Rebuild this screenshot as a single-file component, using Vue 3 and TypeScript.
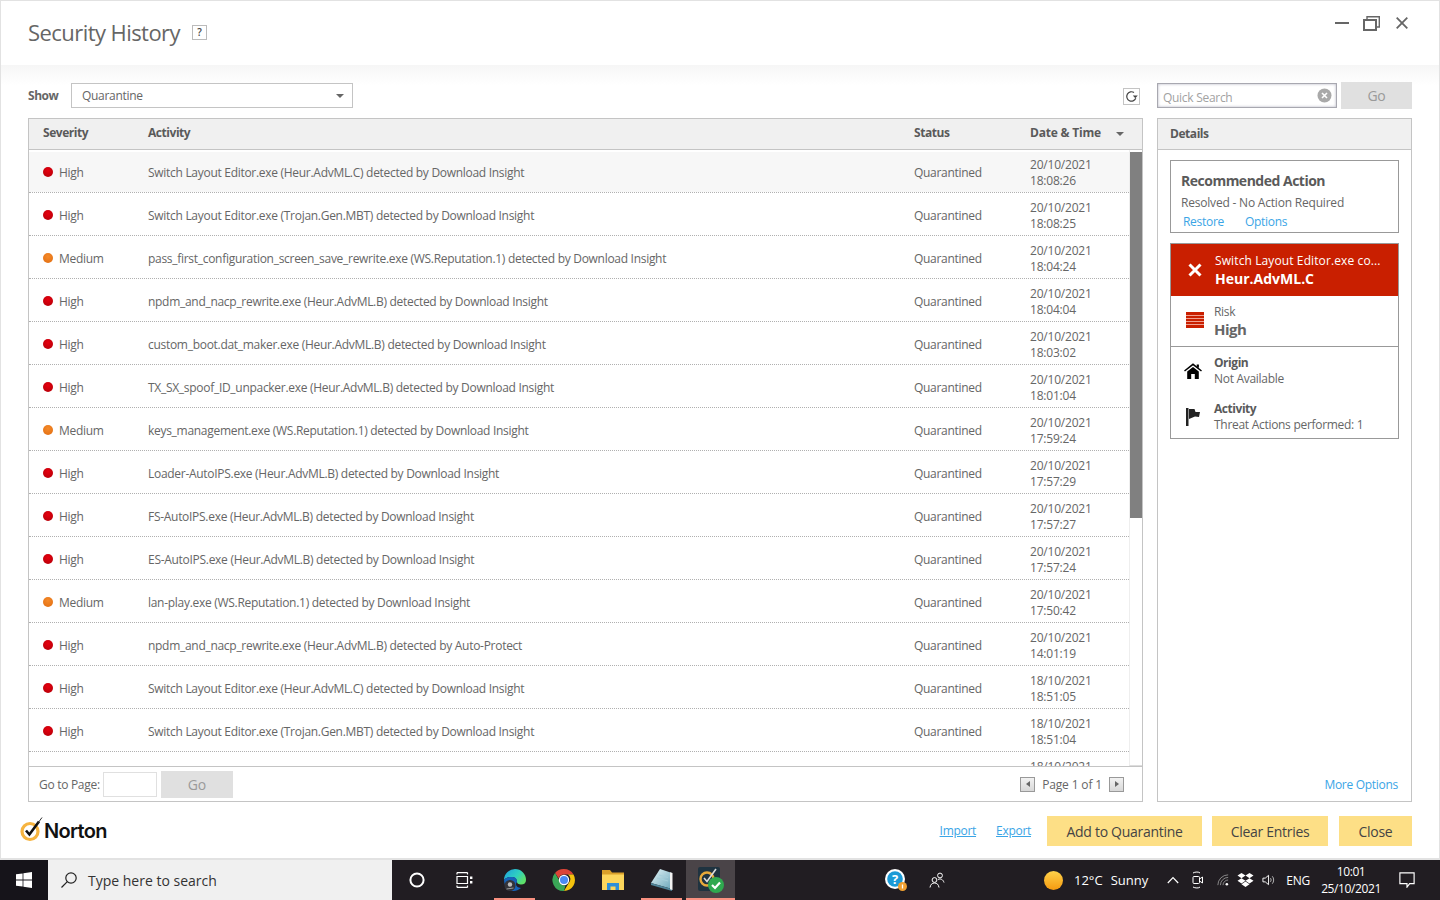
<script setup lang="ts">
interface Row {
  severity: 'High' | 'Medium'
  activity: string
  date: string
  time: string
}

const rows: Row[] = [
  { severity: 'High', activity: 'Switch Layout Editor.exe (Heur.AdvML.C) detected by Download Insight', date: '20/10/2021', time: '18:08:26' },
  { severity: 'High', activity: 'Switch Layout Editor.exe (Trojan.Gen.MBT) detected by Download Insight', date: '20/10/2021', time: '18:08:25' },
  { severity: 'Medium', activity: 'pass_first_configuration_screen_save_rewrite.exe (WS.Reputation.1) detected by Download Insight', date: '20/10/2021', time: '18:04:24' },
  { severity: 'High', activity: 'npdm_and_nacp_rewrite.exe (Heur.AdvML.B) detected by Download Insight', date: '20/10/2021', time: '18:04:04' },
  { severity: 'High', activity: 'custom_boot.dat_maker.exe (Heur.AdvML.B) detected by Download Insight', date: '20/10/2021', time: '18:03:02' },
  { severity: 'High', activity: 'TX_SX_spoof_ID_unpacker.exe (Heur.AdvML.B) detected by Download Insight', date: '20/10/2021', time: '18:01:04' },
  { severity: 'Medium', activity: 'keys_management.exe (WS.Reputation.1) detected by Download Insight', date: '20/10/2021', time: '17:59:24' },
  { severity: 'High', activity: 'Loader-AutoIPS.exe (Heur.AdvML.B) detected by Download Insight', date: '20/10/2021', time: '17:57:29' },
  { severity: 'High', activity: 'FS-AutoIPS.exe (Heur.AdvML.B) detected by Download Insight', date: '20/10/2021', time: '17:57:27' },
  { severity: 'High', activity: 'ES-AutoIPS.exe (Heur.AdvML.B) detected by Download Insight', date: '20/10/2021', time: '17:57:24' },
  { severity: 'Medium', activity: 'lan-play.exe (WS.Reputation.1) detected by Download Insight', date: '20/10/2021', time: '17:50:42' },
  { severity: 'High', activity: 'npdm_and_nacp_rewrite.exe (Heur.AdvML.B) detected by Auto-Protect', date: '20/10/2021', time: '14:01:19' },
  { severity: 'High', activity: 'Switch Layout Editor.exe (Heur.AdvML.C) detected by Download Insight', date: '18/10/2021', time: '18:51:05' },
  { severity: 'High', activity: 'Switch Layout Editor.exe (Trojan.Gen.MBT) detected by Download Insight', date: '18/10/2021', time: '18:51:04' },
]
</script>

<template>
  <div class="screen">
    <div class="window">
      <header class="title-bar">
        <h1>Security History</h1>
        <span class="help">?</span>
        <div class="win-controls">
          <svg width="14" height="14" viewBox="0 0 14 14"><path d="M0 7h14" stroke="#666" stroke-width="2" /></svg>
          <svg class="restore" width="17" height="15" viewBox="0 0 17 15" fill="none" stroke="#666"><path d="M4 3V.7h12.300V11H13" stroke-width="1.400" /><rect x="1" y="4" width="12" height="10" stroke-width="2" /></svg>
          <svg width="12" height="12" viewBox="0 0 12 12"><path d="M.7.7l10.600 10.600M11.300.7L.7 11.300" stroke="#666" stroke-width="1.800" /></svg>
        </div>
      </header>

      <div class="toolbar">
        <span class="show-label">Show</span>
        <div class="select">
          <span>Quarantine</span>
          <i class="caret"></i>
        </div>
        <button class="refresh" aria-label="Refresh">
          <svg width="13" height="13" viewBox="0 0 13 13" fill="none"><path d="M10.800 8.300A4.700 4.700 0 1 1 9 2.500" stroke="#444" stroke-width="1.200" /><path d="M7.800 5.500h5l-2.500 2.800z" fill="#444" /></svg>
        </button>
        <div class="search">
          <span>Quick Search</span>
          <svg width="15" height="15" viewBox="0 0 15 15"><circle cx="7.500" cy="7.500" r="7" fill="#a9a9a9" /><path d="M5 5l5 5M10 5l-5 5" stroke="#fff" stroke-width="1.600" /></svg>
        </div>
        <button class="go go-top">Go</button>
      </div>

      <main class="panels">
        <section class="table-panel">
          <div class="table-head">
            <span>Severity</span>
            <span>Activity</span>
            <span>Status</span>
            <span class="date-head">Date &amp; Time<i class="caret small"></i></span>
          </div>
          <div class="table-body">
            <div class="rows">
              <div v-for="(row, i) in rows" :key="i" class="row" :class="{ first: i === 0 }">
                <span class="sev"><i class="dot" :class="row.severity.toLowerCase()"></i>{{ row.severity }}</span>
                <span>{{ row.activity }}</span>
                <span>Quarantined</span>
                <span class="when">{{ row.date }}<br />{{ row.time }}</span>
              </div>
              <div class="row clipped"><span></span><span></span><span></span><span class="when">18/10/2021</span></div>
            </div>
            <div class="scrollbar"><div class="thumb"></div></div>
          </div>
          <div class="table-foot">
            <span>Go to Page:</span>
            <div class="page-input"></div>
            <button class="go go-page">Go</button>
            <div class="pager">
              <button class="page-btn"><i class="tri left"></i></button>
              <span>Page 1 of 1</span>
              <button class="page-btn"><i class="tri right"></i></button>
            </div>
          </div>
        </section>

        <aside class="details">
          <div class="details-head">Details</div>
          <div class="details-body">
            <div class="card action">
              <h3>Recommended Action</h3>
              <p>Resolved - No Action Required</p>
              <div class="action-links"><a>Restore</a><a>Options</a></div>
            </div>
            <div class="card info">
              <div class="threat">
                <svg width="14" height="14" viewBox="0 0 14 14"><path d="M1.500 1.500l11 11M12.500 1.500l-11 11" stroke="#fff" stroke-width="3" /></svg>
                <div>
                  <div class="threat-file">Switch Layout Editor.exe co...</div>
                  <div class="threat-name">Heur.AdvML.C</div>
                </div>
              </div>
              <div class="risk">
                <svg width="18" height="16" viewBox="0 0 18 16"><path d="M0 0h18v16H0z" fill="#c91f00" /><path d="M0 3.500h18M0 6.500h18M0 9.500h18M0 12.500h18" stroke="#f0a090" /></svg>
                <div>
                  <div class="risk-label">Risk</div>
                  <div class="risk-value">High</div>
                </div>
              </div>
              <div class="meta">
                <div class="meta-row">
                  <svg width="18" height="16" viewBox="0 0 18 16"><path d="M.5 8L9 1.300 17.500 8" fill="none" stroke="#000" stroke-width="1.500" /><path d="M3.200 8.600L9 4l5.800 4.600V16h-4v-5H7.200v5h-4zM12.700 1.500h2.200v3.600l-2.200-1.700z" fill="#000" /></svg>
                  <div><b>Origin</b><span>Not Available</span></div>
                </div>
                <div class="meta-row">
                  <svg width="14" height="18" viewBox="0 0 14 18"><path d="M0 0h2.500v18H0z" fill="#222" /><path d="M3 1h5.500l1 3H14l-1 5-4-.5L3 11z" fill="#222" /></svg>
                  <div><b>Activity</b><span>Threat Actions performed: 1</span></div>
                </div>
              </div>
            </div>
            <a class="more">More Options</a>
          </div>
        </aside>
      </main>

      <footer class="actions">
        <div class="norton">
          <svg width="23" height="25" viewBox="0 0 23 25"><circle cx="10" cy="14.500" r="8" fill="none" stroke="#f6b440" stroke-width="3.200" /><path d="M6 13.500l3.400 4L19 4.500" fill="none" stroke="#111" stroke-width="2.600" /><path d="M18 6l4-5.500" fill="none" stroke="#333" /></svg>
          <span>Norton</span>
        </div>
        <a class="link import">Import</a>
        <a class="link export">Export</a>
        <button class="yellow add">Add to Quarantine</button>
        <button class="yellow clear">Clear Entries</button>
        <button class="yellow close">Close</button>
      </footer>
    </div>

    <div class="taskbar">
      <div class="start">
        <svg width="16" height="16" viewBox="0 0 16 16" fill="#fff"><path d="M0 2.300l6.600-.9v6.200H0zM7.400 1.300L16 0v7.600H7.400zM0 8.400h6.600v6.200L0 13.700zM7.400 8.400H16V16l-8.600-1.200z" /></svg>
      </div>
      <div class="tb-search">
        <svg width="18" height="18" viewBox="0 0 18 18" fill="none" stroke="#222" stroke-width="1.200"><circle cx="11" cy="7" r="5.200" /><path d="M7.300 10.700L1.500 16.500" /></svg>
        <span>Type here to search</span>
      </div>
      <div class="slot">
        <svg width="16" height="16" viewBox="0 0 16 16"><circle cx="8" cy="8" r="6.600" fill="none" stroke="#fff" stroke-width="2" /></svg>
      </div>
      <div class="slot task-view">
        <svg width="17" height="16" viewBox="0 0 17 16" fill="none" stroke="#fff" stroke-width="1.200"><path d="M1 .6h10.500M1 15.400h10.500M1 4.500h10.500v7H1z" /><path d="M1 .6v1.800M11.500.6v1.800M1 13.600v1.800M11.500 13.600v1.800" /><path d="M14 4.500h2.400v2.400H14zM14 9h2.400v2.400H14z" fill="#fff" stroke="none" /></svg>
      </div>
      <div class="slot marked">
        <svg width="24" height="24" viewBox="0 0 24 24"><defs><linearGradient id="edgeA" x1="0" y1="0" x2="1" y2="0.600"><stop offset="0" stop-color="#1d9fe0" /><stop offset="0.600" stop-color="#2fd0c0" /><stop offset="1" stop-color="#5ee06a" /></linearGradient></defs><path d="M1 12a11 11 0 0 1 22 0c0 3-2 4.500-5 4.500-2.500 0-4-1-4-2.500 0-4-3-5-5.500-5S2.500 10 1 12z" fill="url(#edgeA)" /><path d="M1 12c1.500-2 4-3 7.500-3S14 10 14 14c-2 2-1 6 4 6-5 4.500-11 3.500-14 0-2-2-3-5-3-8z" fill="#1662b8" /><circle cx="7" cy="17.500" r="5.500" fill="#34343a" /><circle cx="7" cy="16.500" r="2.200" fill="#bcbcbc" /><path d="M3.500 21l7-1" stroke="#999" /></svg>
      </div>
      <div class="slot">
        <svg width="24" height="24" viewBox="0 0 24 24"><path d="M12 1a11 11 0 0 1 9.500 5.500H12a5.500 5.500 0 0 0-5.300 4L3 5A11 11 0 0 1 12 1z" fill="#db4437" /><path d="M21.500 6.500A11 11 0 0 1 12 23l4.700-8a5.500 5.500 0 0 0-.8-8.500z" fill="#f4c20d" /><path d="M12 23A11 11 0 0 1 3 5l4 7a5.500 5.500 0 0 0 6.500 5.300z" fill="#3aa757" /><circle cx="12" cy="12" r="5.200" fill="#fff" /><circle cx="12" cy="12" r="4" fill="#4a8af4" /></svg>
      </div>
      <div class="slot">
        <svg width="22" height="20" viewBox="0 0 22 20"><path d="M0 0h8l2 2.500h12v4H0z" fill="#d9a02a" /><path d="M0 4.500h22V20H0z" fill="#fcd65c" /><path d="M5 20v-7h12v7h-3.500v-3.500h-5V20z" fill="#2f8fd8" /></svg>
      </div>
      <div class="slot marked">
        <svg width="24" height="24" viewBox="0 0 24 24"><defs><linearGradient id="noteA" x1="0" y1="0" x2="1" y2="1"><stop offset="0" stop-color="#e4f4f7" /><stop offset="1" stop-color="#6aa6ba" /></linearGradient></defs><path d="M10 1l12 4v16L1 15z" fill="url(#noteA)" /><path d="M1 15l21 6v2L1 17z" fill="#4f8499" /><path d="M20 4.300l2.500.8v17l-2.500-.8z" fill="#f2f2f2" /><path d="M9 7l9 2.500M7 10l11 3" stroke="#a5cfdb" /></svg>
      </div>
      <div class="slot active marked">
        <svg width="28" height="28" viewBox="0 0 28 28"><rect x="1" y="1" width="22" height="24" rx="2" fill="#1f3340" /><circle cx="10" cy="13" r="6.500" fill="none" stroke="#e7a93a" stroke-width="2.400" /><path d="M7 12l3 3.500L19 3" fill="none" stroke="#ddd" stroke-width="1.600" /><circle cx="19" cy="19" r="8" fill="#2fa84f" /><path d="M15 19l3 3 5-5.500" fill="none" stroke="#fff" stroke-width="2.200" /></svg>
      </div>

      <div class="tray">
        <svg class="t-help" width="24" height="24" viewBox="0 0 24 24"><circle cx="11" cy="11" r="10" fill="#fff" /><circle cx="11" cy="11" r="7.800" fill="#1b9ad6" /><text x="11" y="15.500" text-anchor="middle" font-size="13" font-weight="700" fill="#fff" font-family="Open Sans, sans-serif">?</text><circle cx="18.500" cy="18.500" r="4.500" fill="#f0a030" /><path d="M18.500 16.500v4" stroke="#fff" stroke-width="1.300" /></svg>
        <svg class="t-people" width="16" height="16" viewBox="0 0 16 16" fill="none" stroke="#fff"><circle cx="5.500" cy="8" r="2.400" /><path d="M1 15.500c.5-3 2-4.500 4.500-4.500s4 1.500 4.500 4.500" /><circle cx="11" cy="3.500" r="2.400" /><path d="M9 7.500c2.500-1.200 5-.2 6 3" /></svg>
        <i class="sun"></i>
        <span class="temp">12°C</span>
        <span class="sky">Sunny</span>
        <svg class="t-chev" width="12" height="8" viewBox="0 0 12 8" fill="none" stroke="#fff" stroke-width="1.200"><path d="M.8 7L6 1.500 11.200 7" /></svg>
        <svg class="t-meet" width="12" height="18" viewBox="0 0 12 18" fill="none" stroke="#fff"><path d="M1 2c2-1.300 6-1.300 7 0M1 16c2 1.300 6 1.300 7 0" /><rect x="1" y="5.500" width="6.500" height="7" rx="1" /><path d="M7.500 8l3-2v6l-3-2" /></svg>
        <svg class="t-wifi" width="12" height="12" viewBox="0 0 14 14" fill="none" stroke="#999"><path d="M1 13A12 12 0 0 1 13 1M4 13a9 9 0 0 1 9-9M7 13a6 6 0 0 1 6-6" /><circle cx="11.500" cy="12" r="1.500" fill="#fff" stroke="none" /></svg>
        <svg class="t-drop" width="17" height="14" viewBox="0 0 16 14" fill="#fff"><path d="M4 0l4 2.600L4 5.200 0 2.600zM12 0l4 2.600-4 2.600-4-2.600zM0 7.800l4-2.600 4 2.600-4 2.600zM8 7.800l4-2.600 4 2.600-4 2.600zM4 11.200L8 8.600l4 2.600L8 14z" /></svg>
        <svg class="t-vol" width="14" height="14" viewBox="0 0 15 14" fill="none" stroke="#fff"><path d="M1 5v4h2.500L7 12V2L3.500 5z" /><path d="M9 5c1 1 1 3 0 4M11 3c2 2 2 6 0 8" stroke="#bbb" /></svg>
        <span class="lang">ENG</span>
        <div class="clock"><span>10:01</span><span>25/10/2021</span></div>
        <svg class="t-note" width="16" height="16" viewBox="0 0 18 18" fill="none" stroke="#fff" stroke-width="1.300"><path d="M1 1h16v12h-5l-3 4v-4H1z" /></svg>
      </div>
    </div>
  </div>
</template>

<style>
html,
body {
  margin: 0;
  overflow: hidden;
}
</style>

<style scoped>
.screen {
  width: 1440px;
  height: 900px;
  display: flex;
  flex-direction: column;
  font-family: 'Open Sans', 'Noto Sans', sans-serif;
  font-size: 12px;
  letter-spacing: -0.29px;
  color: #666;
  background: #fff;
}

button {
  font: inherit;
  letter-spacing: inherit;
  border: 0;
  padding: 0;
}

.window {
  height: 860px;
  box-sizing: border-box;
  border: 1px solid #e2e2e2;
  border-bottom-width: 2px;
  display: flex;
  flex-direction: column;
}

.title-bar {
  height: 64px;
  flex: none;
  display: flex;
  align-items: center;
  padding: 0 31px 0 27px;
  box-sizing: border-box;
}

.title-bar h1 {
  margin: -2px 0 0;
  font-size: 22px;
  font-weight: 400;
  color: #666;
  letter-spacing: -0.56px;
}

.help {
  width: 13px;
  height: 13px;
  margin: -1px 0 0 12px;
  border: 1px solid #bbb;
  font-size: 10px;
  font-weight: 600;
  line-height: 13px;
  text-align: center;
  color: #444;
}

.win-controls {
  margin: -20px 0 0 auto;
  display: flex;
  align-items: center;
  gap: 14px;
}

.restore {
  margin-right: 2px;
}

.toolbar {
  height: 53px;
  flex: none;
  box-sizing: border-box;
  padding: 18px 27px 0;
  display: flex;
  align-items: flex-start;
  background: linear-gradient(#f6f6f6, #fff 20px);
}

.show-label {
  width: 43px;
  line-height: 25px;
  font-weight: 700;
  letter-spacing: -0.45px;
}

.select {
  width: 282px;
  height: 25px;
  box-sizing: border-box;
  border: 1px solid #c4c4c4;
  background: #fff;
  padding: 0 8px 0 10px;
  display: flex;
  align-items: center;
  justify-content: space-between;
  line-height: 23px;
}

.caret {
  width: 0;
  height: 0;
  border-left: 4px solid transparent;
  border-right: 4px solid transparent;
  border-top: 4px solid #666;
}

.caret.small {
  margin: 2px 0 0 15px;
}

.refresh {
  width: 17px;
  height: 17px;
  box-sizing: border-box;
  margin: 5px 0 0 770px;
  border: 1px solid #c4c4c4;
  background: #fff;
  display: flex;
  align-items: center;
  justify-content: center;
}

.search {
  width: 180px;
  height: 25px;
  margin-left: 17px;
  box-sizing: border-box;
  border: 1px solid #a8a8b0;
  box-shadow: inset 0 0 3px #b4b4c2;
  background: #fff;
  padding: 3px 4px 0 5px;
  display: flex;
  align-items: center;
  justify-content: space-between;
  color: #a2a2a2;
}

.search svg {
  margin-top: -4px;
}

.go {
  background: #e0e0e0;
  color: #9a9a9a;
  font-size: 14px;
}

.go-top {
  width: 71px;
  height: 27px;
  margin: -1px 0 0 4px;
}

.panels {
  height: 684px;
  flex: none;
  padding: 0 27px;
  display: flex;
  gap: 14px;
}

.table-panel {
  width: 1115px;
  box-sizing: border-box;
  border: 1px solid #c4c4c4;
  display: flex;
  flex-direction: column;
}

.table-head,
.row {
  display: grid;
  grid-template-columns: 119px 766px 116px 1fr;
  align-items: center;
}

.table-head {
  height: 30px;
  flex: none;
  box-sizing: content-box;
  background: #f0f0f0;
  border-bottom: 1px solid #c4c4c4;
  font-weight: 700;
  letter-spacing: -0.45px;
  color: #5a5a5a;
}

.table-head > span {
  margin-top: -3px;
}

.table-head > span:first-child {
  padding-left: 14px;
}

.date-head {
  display: flex;
  align-items: center;
  letter-spacing: -0.2px;
}

.table-body {
  height: 616px;
  flex: none;
  display: flex;
  overflow: hidden;
}

.rows {
  width: 1100px;
  flex: none;
}

.row {
  height: 43px;
  box-sizing: border-box;
  padding-top: 2px;
  border-bottom: 1px dotted #b0b0b0;
}

.row.first {
  background: linear-gradient(#fff 2px, #f7f7f7 2px);
}

.row.clipped {
  align-items: start;
  padding-top: 6px;
}

.sev {
  padding-left: 14px;
  display: flex;
  align-items: center;
  gap: 6px;
}

.dot {
  width: 10px;
  height: 10px;
  margin-top: -1px;
  border-radius: 50%;
}

.dot.high {
  background: radial-gradient(circle at 50% 35%, #e6000f, #b00008);
}

.dot.medium {
  background: radial-gradient(circle at 50% 35%, #f58a2a, #e06c10);
}

.when {
  margin-top: 1px;
  line-height: 16px;
  letter-spacing: -0.2px;
}

.scrollbar {
  flex: 1;
  padding-top: 2px;
  box-sizing: border-box;
  border-left: 1px solid #eee;
  border-bottom: 1px solid #ddd;
}

.thumb {
  height: 366px;
  background: #808080;
}

.table-foot {
  height: 34px;
  flex: none;
  box-sizing: content-box;
  border-top: 1px solid #c4c4c4;
  padding: 0 18px 0 10px;
  display: flex;
  align-items: center;
}

.page-input {
  width: 54px;
  height: 25px;
  box-sizing: border-box;
  margin-left: 3px;
  border: 1px solid #e0e0e0;
}

.go-page {
  width: 72px;
  height: 27px;
  margin-left: 4px;
}

.pager {
  margin-left: auto;
  display: flex;
  align-items: center;
  gap: 7px;
  letter-spacing: -0.15px;
}

.page-btn {
  width: 15px;
  height: 15px;
  box-sizing: border-box;
  border: 1px solid #999;
  background: linear-gradient(#f2f2f2, #d8d8d8);
  display: flex;
  align-items: center;
  justify-content: center;
}

.tri {
  width: 0;
  height: 0;
  border-top: 3px solid transparent;
  border-bottom: 3px solid transparent;
}

.tri.left {
  border-right: 4px solid #666;
}

.tri.right {
  border-left: 4px solid #666;
}

.details {
  width: 255px;
  box-sizing: border-box;
  border: 1px solid #c4c4c4;
  display: flex;
  flex-direction: column;
}

.details-head {
  height: 30px;
  flex: none;
  line-height: 29px;
  padding-left: 12px;
  background: #f0f0f0;
  border-bottom: 1px solid #c4c4c4;
  font-weight: 700;
  letter-spacing: -0.45px;
  color: #5a5a5a;
}

.details-body {
  flex: 1;
  padding: 10px 12px 8px;
  display: flex;
  flex-direction: column;
}

.card {
  border: 1px solid #999;
}

.action {
  height: 73px;
  box-sizing: border-box;
  padding: 10px 10px 0;
}

.action h3 {
  margin: 0;
  font-size: 14px;
  line-height: 19px;
  font-weight: 700;
  letter-spacing: -0.5px;
  color: #5a5a5a;
}

.action p {
  margin: 5px 0 0;
  line-height: 16px;
  letter-spacing: -0.2px;
}

.action-links {
  margin: 3px 0 0 2px;
  display: flex;
  gap: 21px;
  line-height: 16px;
}

.action-links a,
.more {
  color: #3aa5e6;
}

.info {
  height: 196px;
  box-sizing: border-box;
  margin-top: 10px;
}

.threat {
  height: 52px;
  box-sizing: border-box;
  background: #c91f00;
  color: #fff;
  padding: 0 0 0 17px;
  display: flex;
  align-items: center;
  gap: 13px;
}

.threat-file {
  line-height: 18px;
  letter-spacing: 0.11px;
}

.threat-name {
  font-size: 14px;
  line-height: 18px;
  font-weight: 700;
  letter-spacing: 0;
}

.risk {
  height: 51px;
  box-sizing: border-box;
  border-bottom: 1px solid #999;
  padding: 2px 0 0 15px;
  display: flex;
  align-items: center;
  gap: 10px;
}

.risk svg {
  margin-top: -5px;
}

.risk-label {
  line-height: 14px;
}

.risk-value {
  font-size: 15px;
  line-height: 21px;
  font-weight: 700;
  letter-spacing: -0.5px;
}

.meta {
  padding-top: 8px;
  display: flex;
  flex-direction: column;
  gap: 14px;
}

.meta-row {
  display: flex;
  align-items: center;
  gap: 12px;
  padding-left: 13px;
}

.meta-row b,
.meta-row span {
  display: block;
  line-height: 16px;
}

.meta-row b {
  font-weight: 700;
  letter-spacing: -0.45px;
  color: #5a5a5a;
}

.meta-row:last-child svg {
  margin: 0 2px 0 2px;
}

.more {
  margin-top: auto;
  align-self: flex-end;
  padding-right: 1px;
  font-size: 12px;
}

.actions {
  flex: 1;
  box-sizing: border-box;
  padding: 2px 27px 0 19px;
  display: flex;
  align-items: center;
}

.norton {
  display: flex;
  align-items: center;
  margin-right: auto;
  color: #111;
}

.norton svg {
  margin-top: -4px;
}

.norton span {
  font-family: 'Inter', sans-serif;
  font-size: 20px;
  font-weight: 600;
  letter-spacing: -0.7px;
  margin-left: 1px;
}

.link {
  color: #3aa5e6;
  text-decoration: underline;
  margin-top: -2px;
}

.import {
  margin-right: 20px;
}

.export {
  margin-right: 16px;
}

.yellow {
  height: 30px;
  background: #fddf86;
  color: #444;
  font-size: 14px;
}

.add {
  width: 155px;
}

.clear {
  width: 116px;
  margin-left: 10px;
}

.close {
  width: 73px;
  margin-left: 11px;
}

.taskbar {
  height: 40px;
  flex: none;
  display: flex;
  align-items: center;
  background: #211d22;
  color: #fff;
  letter-spacing: 0;
}

.start {
  width: 48px;
  height: 40px;
  display: flex;
  align-items: center;
  justify-content: center;
  background: #16141a;
}

.tb-search {
  width: 344px;
  height: 40px;
  box-sizing: border-box;
  padding-left: 12px;
  display: flex;
  align-items: center;
  gap: 10px;
  background: #f0f0f0;
  color: #333;
  font-size: 14px;
}

.slot {
  width: 49px;
  height: 40px;
  flex: none;
  position: relative;
  display: flex;
  align-items: center;
  justify-content: center;
}

.task-view svg {
  margin-left: -3px;
}

.slot.marked::after {
  content: '';
  position: absolute;
  left: 4px;
  right: 4px;
  bottom: 0;
  height: 2px;
  background: #f99080;
}

.slot.active {
  background: #4a4448;
}

.slot.active.marked::after {
  left: 0;
  right: 0;
}

.tray {
  flex: 1;
  display: flex;
  align-items: center;
  font-size: 13px;
}

.t-help {
  margin-left: 149px;
}

.t-people {
  margin-left: 21px;
}

.sun {
  width: 19px;
  height: 19px;
  margin-left: 99px;
  border-radius: 50%;
  background: linear-gradient(#ffd24a, #f59a10);
}

.temp {
  margin-left: 11px;
}

.sky {
  margin-left: 8px;
}

.t-chev {
  margin-left: 19px;
}

.t-meet {
  margin-left: 13px;
}

.t-wifi {
  margin-left: 13px;
}

.t-drop {
  margin-left: 8px;
}

.t-vol {
  margin-left: 8px;
}

.lang {
  margin-left: 10px;
  font-size: 12px;
  letter-spacing: -0.2px;
}

.clock {
  width: 60px;
  margin-left: 11px;
  display: flex;
  flex-direction: column;
  align-items: center;
  font-size: 12px;
  letter-spacing: -0.4px;
  line-height: 17px;
}

.t-note {
  margin-left: 18px;
}
</style>
